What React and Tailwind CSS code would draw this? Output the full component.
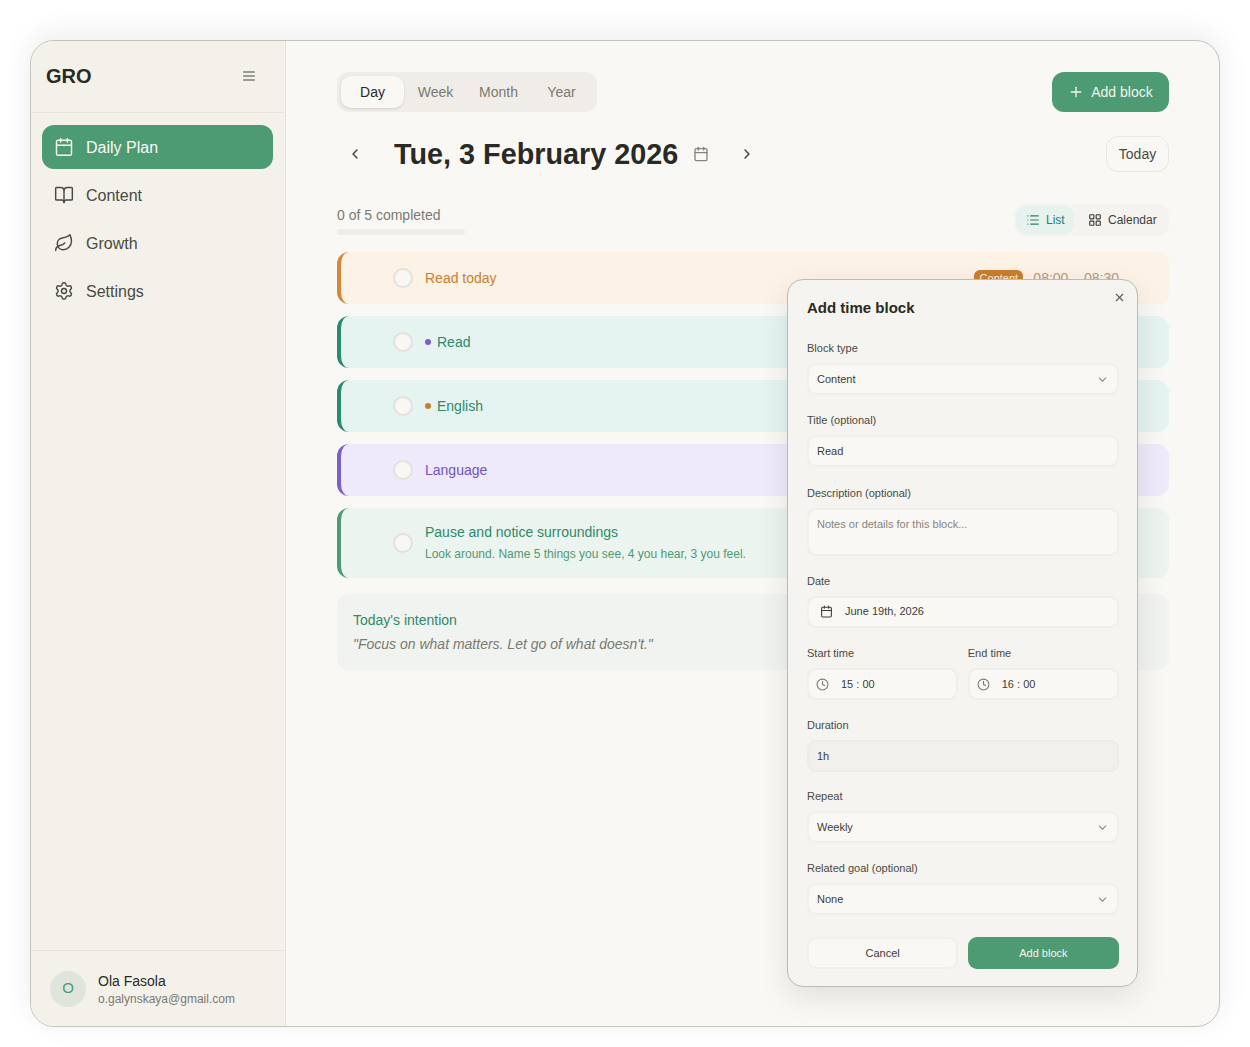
import { Calendar, BookOpen, Leaf, Settings, Plus, ChevronLeft, ChevronRight, ChevronDown, List, LayoutGrid, X, Clock } from 'lucide-react'

const NAV = [
  { label: 'Daily Plan', icon: Calendar, active: true },
  { label: 'Content', icon: BookOpen },
  { label: 'Growth', icon: Leaf },
  { label: 'Settings', icon: Settings },
]

const TABS = ['Day', 'Week', 'Month', 'Year']

const fieldBox = 'flex items-center h-8 rounded-[9px] border-2 border-[#f1efea] bg-[#faf8f5] text-[11px] text-[#3d3d36]'

function Circle() {
  return <span className="w-5 h-5 shrink-0 rounded-full border-2 border-[#e2e2da] bg-[#f8f7f3]" />
}

function Task({ bar, bg, text, dot, title }) {
  return (
    <div className={`flex items-center h-[52px] pl-[52px] rounded-xl border-l-4 ${bar} ${bg}`}>
      <Circle />
      {dot && <span className={`ml-3 w-1.5 h-1.5 rounded-full ${dot}`} />}
      <span className={`${dot ? 'ml-[6px]' : 'ml-3'} text-sm ${text}`}>{title}</span>
    </div>
  )
}

function Field({ label, children, className = '' }) {
  return (
    <div className={className}>
      <div className="h-4 mb-[7px] leading-4 text-[11px] text-[#4a4a42]">{label}</div>
      {children}
    </div>
  )
}

function SelectBox({ value }) {
  return (
    <div className={`${fieldBox} justify-between pl-2 pr-2`}>
      <span>{value}</span>
      <ChevronDown size={13} className="text-[#8a8a80]" />
    </div>
  )
}

function TimeBox({ value }) {
  return (
    <div className={`${fieldBox} pl-[7px]`}>
      <Clock size={13} className="text-[#7a7a70]" />
      <span className="ml-[12px]">{value}</span>
    </div>
  )
}

function AddBlockModal() {
  return (
    <div className="absolute left-[756px] top-[238px] w-[351px] h-[708px] rounded-2xl border border-[#bcbcb4] bg-[#f5f4f0] pl-[19px] pr-[18px] shadow-[0_10px_30px_rgba(0,0,0,0.1)]">
      <X size={13} className="absolute right-[11px] top-[11px] text-[#5a5a52]" />
      <h2 className="pt-[19px] h-[60px] text-[15px] leading-[18px] font-bold text-[#2a2a25]">Add time block</h2>
      <div className="flex flex-col gap-[17px]">
        <Field label="Block type"><SelectBox value="Content" /></Field>
        <Field label="Title (optional)">
          <div className={`${fieldBox} pl-2`}>Read</div>
        </Field>
        <Field label="Description (optional)" className="mt-[0.5px]">
          <div className={`${fieldBox} !h-12 !items-start pl-2 pt-[6px] !text-[#85857b]`}>Notes or details for this block...</div>
        </Field>
        <Field label="Date">
          <div className={`${fieldBox} pl-[11px]`}>
            <Calendar size={13} />
            <span className="ml-[12px]">June 19th, 2026</span>
          </div>
        </Field>
        <div className="grid grid-cols-2 gap-[9.5px] mt-[0.5px]">
          <Field label="Start time"><TimeBox value="15 : 00" /></Field>
          <Field label="End time"><TimeBox value="16 : 00" /></Field>
        </div>
        <Field label="Duration">
          <div className={`${fieldBox} pl-2 !bg-[#f2f0eb] !border-[#eeece6]`}>1h</div>
        </Field>
        <Field label="Repeat" className="-mt-px"><SelectBox value="Weekly" /></Field>
        <Field label="Related goal (optional)"><SelectBox value="None" /></Field>
      </div>
      <div className="grid grid-cols-2 gap-[9.5px] mt-[22px]">
        <button className={`${fieldBox} justify-center`}>Cancel</button>
        <button className="h-8 rounded-[9px] bg-[#4d9b73] text-[11px] text-[#f5f4ef]">Add block</button>
      </div>
    </div>
  )
}

export default function App() {
  return (
    <div className="h-[1047px] pt-10 pl-[30px] bg-white font-['Liberation_Sans',Arial,sans-serif]">
      <div className="relative flex w-[1190px] h-[987px] overflow-hidden rounded-3xl border border-[#c4c4bd] bg-[#faf8f5] shadow-[0_-6px_30px_rgba(0,0,0,0.08)]">
        <aside className="flex flex-col w-[255px] shrink-0 border-r border-[#e6e3dc] bg-[#f4f1eb]">
          <div className="flex items-center justify-between h-[72px] pb-0.5 pl-[15px] pr-[28px] border-b border-[#e8e5de]">
            <span className="text-xl font-bold text-[#2a2a25]">GRO</span>
            <svg width="16" height="16" viewBox="0 0 24 24" fill="none" stroke="#7f7f76" strokeWidth="2" strokeLinecap="round">
              <path d="M4 6h16M4 12h16M4 18h16" />
            </svg>
          </div>
          <nav className="flex flex-col gap-1 ml-[11px] mr-3 mt-3">
            {NAV.map(({ label, icon: Icon, active }) => (
              <div
                key={label}
                className={`flex items-center gap-3 h-11 px-3 rounded-xl text-base ${active ? 'bg-[#4d9b73] text-[#fbfaf6]' : 'text-[#4a4a42]'}`}
              >
                <Icon size={20} strokeWidth={1.75} />
                <span className="pt-0.5">{label}</span>
              </div>
            ))}
          </nav>
          <div className="flex items-center gap-3 mt-auto h-[76px] pl-[19px] border-t border-[#e8e5de]">
            <span className="flex items-center justify-center w-9 h-9 rounded-full bg-[#dfe5dd] text-[15px] text-[#4d9b73]">O</span>
            <div>
              <div className="text-sm leading-5 text-[#2a2a25]">Ola Fasola</div>
              <div className="text-xs leading-4 text-[#7a7a70]">o.galynskaya@gmail.com</div>
            </div>
          </div>
        </aside>

        <main className="flex-1 pt-[31px] pl-[51px] pr-[50px]">
          <div className="flex items-center justify-between">
            <div className="grid grid-cols-4 gap-0 w-[260px] h-10 p-1 rounded-xl bg-[#f0ede8]">
              {TABS.map(t => (
                <div
                  key={t}
                  className={`flex items-center justify-center rounded-[10px] text-sm ${t === 'Day' ? 'bg-[#faf8f5] text-[#2a2a25] shadow-sm' : 'text-[#7a7a70]'}`}
                >
                  {t}
                </div>
              ))}
            </div>
            <button className="flex items-center justify-center gap-[7px] w-[117px] h-10 rounded-xl bg-[#4d9b73] text-sm text-[#f5f4ef]">
              <Plus size={16} />
              Add block
            </button>
          </div>

          <div className="flex items-center h-9 mt-6">
            <ChevronLeft size={16} className="ml-[10px] text-[#3d3d36]" />
            <h1 className="ml-[31px] text-[28.8px] leading-9 font-bold text-[#2a2a25]">Tue, 3 February 2026</h1>
            <Calendar size={16} className="ml-[15px] text-[#85857b]" />
            <ChevronRight size={16} className="ml-[30px] text-[#3d3d36]" />
            <button className="ml-auto w-[63px] h-9 rounded-xl border border-[#ebe8e2] bg-[#faf8f5] text-sm text-[#4a4a42]">Today</button>
          </div>

          <div className="flex items-start justify-between mt-8">
            <div className="pt-px">
              <div className="text-sm leading-5 text-[#7a7a70]">0 of 5 completed</div>
              <div className="w-32 h-1.5 mt-1 rounded-full bg-[#f0ede8]" />
            </div>
            <div className="flex items-center w-[155px] h-8 px-[2px] rounded-xl bg-[#f5f3ef] text-xs">
              <span className="flex items-center gap-[6px] w-[58px] h-7 pl-[10px] rounded-[10px] bg-[#e6f2ee] text-[#2a8068]">
                <List size={14} /> List
              </span>
              <span className="flex items-center gap-[6px] ml-[14px] text-[#3d3d36]">
                <LayoutGrid size={14} /> Calendar
              </span>
            </div>
          </div>

          <div className="flex flex-col gap-3 mt-4">
            <div className="flex items-center h-[52px] pl-[52px] pr-[50px] rounded-xl border-l-4 border-[#d4873a] bg-[#fdf2e6]">
              <Circle />
              <span className="ml-3 text-sm text-[#c9802f]">Read today</span>
              <span className="ml-auto w-[49px] text-center rounded-md bg-[#c97d2e] text-[11px] leading-4 text-[#fdf1e5]">Content</span>
              <span className="ml-[10px] text-sm text-[#b59a80]">08:00 – 08:30</span>
            </div>
            <Task bar="border-[#2a8a70]" bg="bg-[#e5f4f1]" text="text-[#2d8a6a]" dot="bg-[#7b5fc7]" title="Read" />
            <Task bar="border-[#2a8a70]" bg="bg-[#e5f4f1]" text="text-[#2d8a6a]" dot="bg-[#c97d2e]" title="English" />
            <Task bar="border-[#7b5fc7]" bg="bg-[#efeafb]" text="text-[#7254c0]" title="Language" />
            <div className="flex items-center h-[70px] pl-[52px] rounded-xl border-l-4 border-[#4d9b73] bg-[#ebf4ee]">
              <Circle />
              <div className="ml-3">
                <div className="text-sm leading-5 text-[#2d8a6a]">Pause and notice surroundings</div>
                <div className="mt-1 mb-0.5 text-xs leading-4 text-[#4d9b73]">Look around. Name 5 things you see, 4 you hear, 3 you feel.</div>
              </div>
            </div>
          </div>

          <div className="h-[76px] mt-4 pt-4 pl-4 rounded-xl bg-[#f0f3ef]">
            <div className="text-sm leading-5 text-[#2d8a6a]">Today's intention</div>
            <div className="mt-1 text-sm leading-5 italic text-[#7a7a70]">"Focus on what matters. Let go of what doesn't."</div>
          </div>
        </main>

        <AddBlockModal />
      </div>
    </div>
  )
}
